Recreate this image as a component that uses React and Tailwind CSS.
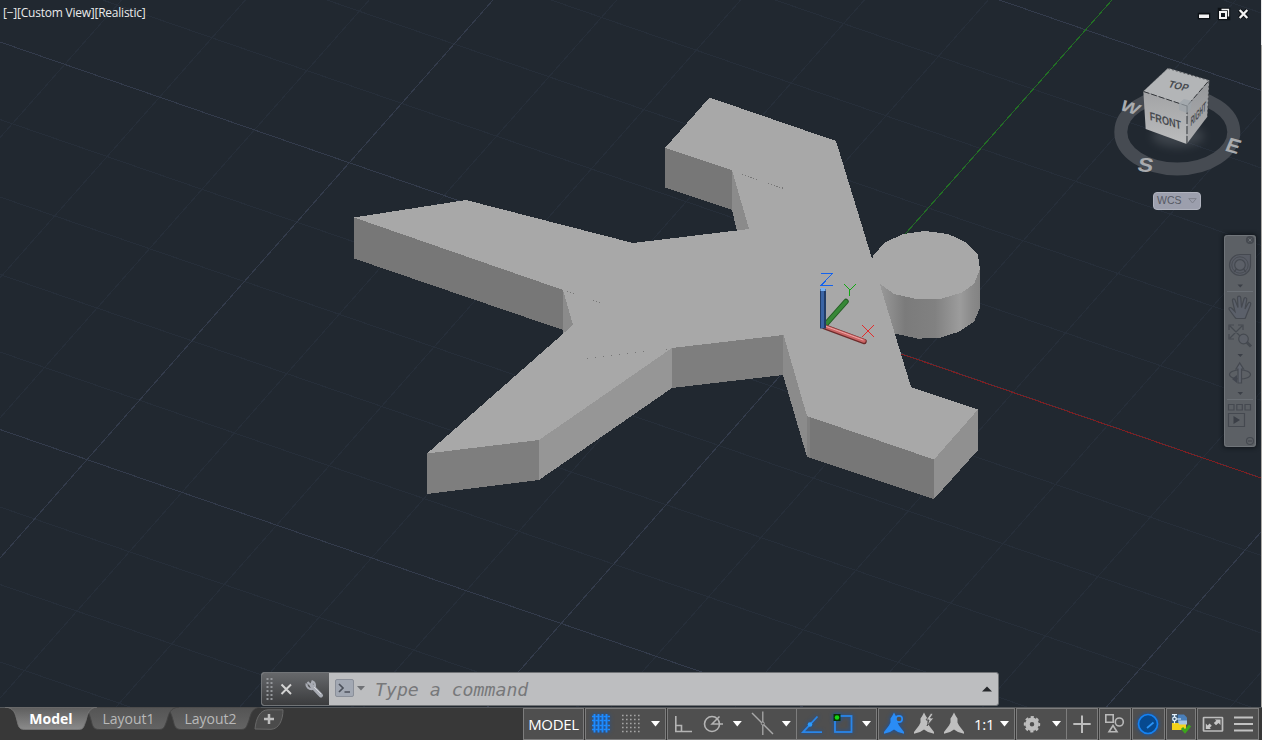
import React from "react";

/* ---------- drawing canvas ---------- */

const GRID_K = 0.3457;
const GRID_M = 1.132;

const rowLines = [];
for (let i = -6; i <= 9; i++) rowLines.push({ y: 42 + i * 77.5, major: i % 5 === 0 });
const colLines = [];
for (let i = -9; i <= 12; i++) colLines.push({ x: 1112 + i * 123.8, major: i % 5 === 0 });

function Grid() {
  const draw = (major) => (
    <g stroke={major ? "#333b4b" : "#262e39"}>
      {rowLines.filter((l) => l.major === major).map((l) => (
        <line key={"r" + l.y} x1="0" y1={l.y} x2="1261" y2={l.y + 1261 * GRID_K} />
      ))}
      {colLines.filter((l) => l.major === major).map((l) => (
        <line key={"c" + l.x} x1={l.x} y1="0" x2={l.x - 707 / GRID_M} y2="707" />
      ))}
    </g>
  );
  return (
    <g shapeRendering="crispEdges">
      {draw(false)}
      {draw(true)}
      <line x1="823" y1="327" x2="1112" y2="0" stroke="#226f24" />
      <line x1="823" y1="327" x2="1261" y2="478" stroke="#7d1f22" />
    </g>
  );
}

function Solid() {
  return (
    <g shapeRendering="crispEdges">
      <polygon fill="#777777" points="354,217.5 370,219 563,286 563,330 354,258.5" />
      <polygon fill="#8b8b8b" points="563,288 576,322 573,326 563,335" />
      <polygon fill="#777777" points="665,148 680,149 732,167 732,210 665,187.5" />
      <polygon fill="#8b8b8b" points="732,168 736,168 751,227 749,230 737,231 732,210" />
      <polygon fill="#7e7e7e" points="427,453 440,448 539,437 539,480 427,494" />
      <polygon fill="#969696" points="539,438 672,345 672,388 539,480" />
      <polygon fill="#7e7e7e" points="672,346 783,333 783,375 672,388" />
      <polygon fill="#8b8b8b" points="783,333 787,333 809,414 807,457 783,375" />
      <polygon fill="#777777" points="807,414 934,457 934,499 807,457" />
      <rect x="807" y="416" width="3" height="41" fill="#808080" />
      <polygon fill="#909090" points="934,457 972,408 978,409 978,450 934,499" />
      <polygon
        fill="url(#cyl)"
        points="872,284 880,280 980,267 980,308 974,321.7 959,331.7 940.7,337.7 918.3,338.7 895,333.5 888,331"
      />
      <polygon
        fill="#a8a8a8"
        points="873,255.7 885,242.3 903.3,234 925,231 948.3,234 966,242.3 977.7,254 980,269 974,284 961.7,292.7 940,299 916.7,299 894,294 880.7,284.3 870,270"
      />
      <polygon
        fill="#a8a8a8"
        points="354,217.5 466,200 633,243 749,229 732,170 665,148 709.5,97.5 836,141 872.5,260 911,387 978,409.5 934,459.5 807,416 783.5,335 672,348 539,440 427,453.5 573,325 563,290"
      />
      <g stroke="#777" strokeDasharray="1 2">
        <path d="M742 174.500L757 179.500M768 183.500L784 188.500M567 291.500L574 293.500M593 300.500L600 302.500" fill="none" />
        <path d="M587 358.500L672 348.500" strokeDasharray="1 7" />
      </g>
    </g>
  );
}

function Ucs() {
  return (
    <g fill="none">
      <g strokeLinecap="round">
        <path d="M826 324L846 301.500" stroke="#245c24" strokeWidth="5.500" />
        <path d="M826 324L846 301.500" stroke="#378837" strokeWidth="3.500" />
        <path d="M825 327L864 341.500" stroke="#6d2b2b" strokeWidth="5.500" />
        <path d="M825 326.700L864 341" stroke="#c96464" strokeWidth="3.500" />
        <path d="M825 326L863 340" stroke="#efa5a5" strokeWidth="1" />
      </g>
      <path d="M823 289V328.500" stroke="#223d68" strokeWidth="6" />
      <path d="M822.500 289V328" stroke="#3a64a5" strokeWidth="3" />
      <path d="M820.500 289.500H825.500" stroke="#78b2f5" strokeWidth="3" />
      <g shapeRendering="crispEdges">
        <path d="M821 273.500H832.500L821 285.500H833" stroke="#1463ee" />
        <path d="M844 284L850 290L856 284M849.500 290V296" stroke="#12a812" />
        <path d="M862 325L874 337M874 325L862 337" stroke="#e22c2c" />
      </g>
    </g>
  );
}

function ViewCube() {
  return (
    <g fontFamily="'Liberation Sans', Arial, sans-serif" fontWeight="700">
      <ellipse cx="1177.300" cy="132" rx="56.500" ry="37" fill="none" stroke="#464b52" strokeWidth="13" />
      <ellipse cx="1178" cy="136" rx="26" ry="11" fill="#7d8288" opacity=".3" filter="url(#soft)" />
      <g fill="#a9abae" fontSize="20">
        <text transform="matrix(.95 .3 -.42 .7 1118.500 109.500)">W</text>
        <text transform="matrix(1 .28 -.4 .95 1224 150.500)">E</text>
        <text transform="matrix(1.150 .1 -.22 .98 1136.500 171)">S</text>
      </g>
      <polygon fill="#b3b5b7" points="1168,68 1209.300,80.300 1187.300,106 1143.300,91.300" />
      <polygon fill="url(#front)" points="1143.300,91.300 1187.300,106 1186.700,144 1145.700,129" />
      <polygon fill="url(#right)" points="1187.300,106 1209.300,80.300 1207.300,116.700 1186.700,144" />
      <g fill="none" stroke="#35383c" strokeWidth="1">
        <path d="M1143.500 91.500L1187 106L1209 80.500" strokeDasharray="6 2" />
        <path d="M1187 106V144" strokeDasharray="8 2" />
        <path d="M1168 68.500L1209 80.500L1207.500 117" strokeDasharray="2 2" opacity=".7" />
        <path d="M1143.500 91L1168 68.500" strokeDasharray="1 1" opacity=".4" />
      </g>
      <g fill="#484b50">
        <text transform="matrix(.96 .22 -.4 .82 1167.500 87)" fontSize="11.500" textLength="20" lengthAdjust="spacingAndGlyphs">TOP</text>
        <text transform="matrix(.95 .29 .06 1 1150 120)" fontSize="12" textLength="33" lengthAdjust="spacingAndGlyphs">FRONT</text>
        <text transform="matrix(.66 -.72 -.04 1 1190.500 126.500)" fontSize="13" textLength="23" lengthAdjust="spacingAndGlyphs">RIGHT</text>
      </g>
      <polygon fill="#9ca4a9" opacity=".7" points="1179,103 1184,99 1192,101 1191,109 1187,113 1179,110" />
    </g>
  );
}

function Scene() {
  return (
    <svg width="1261" height="707" viewBox="0 0 1261 707" className="block">
      <defs>
        <linearGradient id="cyl" gradientUnits="userSpaceOnUse" x1="880" y1="0" x2="980" y2="0">
          <stop offset="0" stopColor="#999" />
          <stop offset=".25" stopColor="#7b7b7b" />
          <stop offset=".55" stopColor="#818181" />
          <stop offset=".8" stopColor="#9c9c9c" />
          <stop offset=".92" stopColor="#8a8a8a" />
          <stop offset="1" stopColor="#838383" />
        </linearGradient>
        <linearGradient id="front" x1="0" y1="0" x2="0" y2="1">
          <stop offset="0" stopColor="#a2a3a5" />
          <stop offset="1" stopColor="#bbbcbd" />
        </linearGradient>
        <linearGradient id="right" x1="0" y1="0" x2="0" y2="1">
          <stop offset="0" stopColor="#95979a" />
          <stop offset="1" stopColor="#adaeb0" />
        </linearGradient>
        <filter id="soft" x="-30%" y="-50%" width="160%" height="200%">
          <feGaussianBlur stdDeviation="5" />
        </filter>
      </defs>
      <Grid />
      <Solid />
      <Ucs />
      <ViewCube />
    </svg>
  );
}

function WindowButtons() {
  return (
    <svg width="54" height="14" viewBox="1197 7 54 14" className="absolute top-[7px] left-[1197px]">
      <g stroke="#0d1115" strokeWidth="2.500" fill="#0d1115">
        <rect x="1199" y="14" width="10" height="4" />
        <path d="M1239.500 10L1247.500 18M1247.500 10L1239.500 18" strokeWidth="4.500" />
        <rect x="1219" y="9" width="10" height="10" />
      </g>
      <rect x="1199" y="14.500" width="10" height="3.500" fill="#f2f2f2" />
      <path d="M1221.500 9.500H1228.500V16.500" stroke="#f2f2f2" strokeWidth="1.300" fill="none" />
      <rect x="1220" y="12" width="6" height="6" fill="#11161b" stroke="#f2f2f2" strokeWidth="2" />
      <path d="M1239.700 10L1247.300 18M1247.300 10L1239.700 18" stroke="#f2f2f2" strokeWidth="2.300" />
    </svg>
  );
}

function NavBar() {
  return (
    <div className="absolute top-[235px] left-[1224px] h-[212px] w-8 rounded-[3px] bg-[#5c6065] shadow-[0_0_4px_1px_rgba(10,14,18,0.7)]">
      <svg width="32" height="212" viewBox="1224 235 32 212" className="block" fill="none" stroke="#454950" strokeWidth="1.200">
        <rect x="1224.500" y="235.500" width="31" height="211" rx="3" stroke="#70757a" strokeWidth="1" />
        <circle cx="1250" cy="240" r="3.500" fill="#484c52" />
        <path d="M1248.500 238.500L1251.500 241.500M1251.500 238.500L1248.500 241.500" stroke="#6a6f75" strokeWidth="1" />
        <path d="M1240 254.500H1250.500V265A10.500 10.500 0 1 1 1240 254.500Z" fill="#585c65" />
        <circle cx="1240" cy="265" r="8.200" strokeWidth=".9" />
        <circle cx="1240" cy="265" r="5.300" fill="#5c6068" />
        <path d="M1234 272L1236.500 269M1246 272L1243.500 269" />
        <path d="M1227 291.500H1253M1227 399.500H1253" stroke="#6b7076" strokeWidth="1" />
        <g fill="#3b3f47" stroke="none">
          <path d="M1237.500 284.500H1243L1240.300 287.500ZM1237.500 354H1243L1240.300 357ZM1237.500 392H1243L1240.300 395Z" />
        </g>
        <path d="M1235 317.500L1229.500 310C1228 308 1230 306.500 1232 308.500L1235 311.500L1232.500 301C1232 298.500 1234.500 298 1235.300 300.500L1238 307.500L1237.500 298C1237.500 295.500 1240.500 295.500 1240.800 298L1241.500 307.500L1244 299C1244.700 296.700 1247.200 297.500 1246.700 300L1245 309L1248 303.500C1249.200 301.500 1251.500 302.500 1250.500 305L1246.500 315C1245.500 318 1245 318.500 1245 318.500H1236Z" fill="#5b606a" />
        <path d="M1230 326L1242 338M1242 326L1230 338M1229 330V325H1234M1238 325H1243V330M1229 334V339H1234" />
        <circle cx="1243.500" cy="339" r="4.800" fill="#5c6068" />
        <path d="M1247 342.500L1251 346.500" strokeWidth="3" />
        <ellipse cx="1240" cy="374.500" rx="10.500" ry="4.500" />
        <path d="M1238 383V369H1236L1239.700 363L1243.500 369H1241.500V383Z" fill="#5f646d" />
        <path d="M1237 375L1232 379L1237 383Z" fill="#42464f" stroke="none" />
        <path d="M1228.500 404.500H1234V410H1228.500ZM1236.800 404.500H1242.300V410H1236.800ZM1245 404.500H1250.500V410H1245Z" />
        <path d="M1228.500 413.500H1244.500V426.500H1228.500Z" />
        <path d="M1233.500 416L1240 420L1233.500 424Z" fill="#3b3f47" stroke="none" />
        <circle cx="1250" cy="441" r="3.500" />
        <path d="M1248 441H1252" />
      </svg>
    </div>
  );
}

function CommandLine() {
  return (
    <div className="absolute top-[672px] left-[261px] flex h-[34px] w-[738px] overflow-hidden rounded-[3px] border border-[#717477] bg-[#bdbec0]">
      <div className="flex w-[67px] shrink-0 items-center bg-linear-to-b from-[#66686b] to-[#3b3c3e]">
        <svg width="67" height="32" viewBox="262 673 67 32" fill="none">
          <path d="M267.500 678V700M271.500 678V700" stroke="#94979b" strokeWidth="2" strokeDasharray="2 2" />
          <path d="M281.500 684.500L291 694M291 684.500L281.500 694" stroke="#d3d3d3" strokeWidth="2" />
          <path d="M312 686L321 695.500" stroke="#a9acb4" strokeWidth="4" strokeLinecap="round" />
          <path d="M307.500 682L311 685.500L312.500 681.500C316 683 315.500 688.500 312.500 689C309 689.500 306 687 306.500 683.500" stroke="#a9acb4" strokeWidth="2.200" fill="none" />
          <path d="M314 687L321 694" stroke="#d5d7dc" strokeWidth="1" />
        </svg>
      </div>
      <div className="flex flex-1 items-center">
        <svg width="36" height="32" viewBox="329 673 36 32" fill="none">
          <rect x="335.500" y="679.500" width="18" height="17" rx="1.500" fill="#a2a8b3" stroke="#8a8f99" />
          <path d="M339 684L343 688L339 692" stroke="#4c515b" strokeWidth="1.700" />
          <path d="M344.500 692H350" stroke="#4c515b" strokeWidth="1.600" />
          <path d="M357 686H365L361 690.500Z" fill="#6f7175" />
        </svg>
        <span className="mt-[2px] ml-[10px] flex-1 whitespace-nowrap font-['DejaVu_Sans_Mono',monospace] text-[18.200px] leading-[32px] text-[#77787a] italic">
          Type a command
        </span>
        <svg width="10" height="6" viewBox="0 0 10 6" className="mr-[6px] shrink-0">
          <path d="M0 5.500L5 0.500L10 5.500Z" fill="#26282b" />
        </svg>
      </div>
    </div>
  );
}

/* ---------- bottom bar ---------- */

function LayoutTab({ label, width, layer, active = false }) {
  return (
    <div className={"relative -ml-[19px] flex h-[23px] items-center justify-center " + layer} style={{ width }}>
      <svg width="100%" height="23" viewBox="0 0 91 23" preserveAspectRatio="none" className="absolute inset-0">
        <defs>
          <linearGradient id={active ? "tabOn" : "tabOff"} x1="0" y1="0" x2="0" y2="1">
            <stop offset="0" stopColor={active ? "#5d5d5d" : "#545454"} />
            <stop offset="1" stopColor={active ? "#8b8b8b" : "#646464"} />
          </linearGradient>
        </defs>
        <path
          d="M0 0C9 1 10 6 12 14C13 19 14 22.500 19 22.500H73C78 22.500 78 19 80 14C82 6 83 1 91 0Z"
          fill={active ? "url(#tabOn)" : "url(#tabOff)"}
          stroke={active ? "#777" : "#444"}
          strokeWidth=".9"
        />
      </svg>
      <span
        className={
          active
            ? "relative font-['Open_Sans','Noto_Sans',sans-serif] text-[14px] leading-[22px] font-bold text-white"
            : "relative font-['Open_Sans','Noto_Sans',sans-serif] text-[14px] leading-[22px] text-[#b9b9b9]"
        }
      >
        {label}
      </span>
    </div>
  );
}

function Group({ children, className }) {
  return (
    <div className={"box-border flex h-[32px] shrink-0 items-center overflow-hidden border border-[#7d7d7d] bg-[#4f4f4f] " + className}>
      {children}
    </div>
  );
}

function Ico({ x, w, children, glow = false }) {
  return (
    <svg
      width={w}
      height="30"
      viewBox={`${x} 709 ${w} 30`}
      fill="none"
      className={glow ? "shrink-0 drop-shadow-[0_0_2px_#0a54b8]" : "shrink-0"}
    >
      {children}
    </svg>
  );
}

function Caret({ x, w, cx }) {
  return (
    <Ico x={x} w={w}>
      <path d={`M${cx - 4.5} 721H${cx + 4.5}L${cx} 726.500Z`} fill="#fff" />
    </Ico>
  );
}

const Person = ({ dx, fill }) => (
  <path
    transform={`translate(${dx} 0)`}
    d="M0 712.500L1.800 716L3.500 718.500V722.500L5 725.500L10 732V733.800L4 732L0 729.500L-4 732L-10 733.800V732L-5 725.500L-3.500 722.500V718.500L-1.800 716Z"
    fill={fill}
  />
);

function StatusBar() {
  return (
    <div className="flex h-[33px] items-start gap-px pt-px font-['Open_Sans','Noto_Sans',sans-serif]">
      <Group className="w-[61px] justify-center">
        <span className="text-[15px] leading-[30px] tracking-[-0.300px] text-white">MODEL</span>
      </Group>
      <Group className="w-[81px]">
        <Ico x={586} w={29} glow>
          <path d="M594.500 714V732.500M598.500 714V732.500M602.500 714V732.500M606.500 714V732.500" stroke="#1e8bff" strokeWidth="1.900" />
          <path d="M592 716.500H610M592 720.500H610M592 725.500H610M592 729.500H610" stroke="#1e8bff" strokeWidth="1.300" strokeDasharray="3.500 .500" />
        </Ico>
        <Ico x={615} w={30}>
          <path d="M622 715.500H640M622 719.500H640M622 723.500H640M622 727.500H640M622 731.500H640" stroke="#a5a5a5" strokeWidth="1.600" strokeDasharray="1.600 2.400" />
        </Ico>
        <Caret x={645} w={20} cx={655.5} />
      </Group>
      <Group className="w-[130px]">
        <Ico x={668} w={29}>
          <path d="M675.800 716V731.500H692M676 725.500H681.500V731" stroke="#b4b4b4" strokeWidth="1.600" />
        </Ico>
        <Ico x={697} w={31}>
          <circle cx="712" cy="724" r="7.500" stroke="#b4b4b4" strokeWidth="1.600" />
          <path d="M723 724H712L719.500 716.500" stroke="#b4b4b4" strokeWidth="1.500" />
        </Ico>
        <Caret x={728} w={20} cx={737.3} />
        <Ico x={748} w={28}>
          <path d="M752 713L773 734" stroke="#a8a8a8" strokeWidth="1.500" />
          <path d="M762.800 711.500V735" stroke="#a8a8a8" strokeWidth="1.300" />
          <circle cx="762.800" cy="723.500" r="1.500" fill="#4f4f4f" stroke="#a8a8a8" />
        </Ico>
        <Caret x={776} w={20} cx={786.3} />
      </Group>
      <Group className="-ml-[2px] w-[81px]">
        <Ico x={797} w={30} glow>
          <path d="M817.500 716.500L803 732.200H822" stroke="#2a86e8" strokeWidth="1.800" />
          <circle cx="810" cy="724.500" r="2.300" fill="#2a9bff" />
        </Ico>
        <Ico x={827} w={30} glow>
          <rect x="835" y="716" width="16.500" height="16" stroke="#2a86e8" strokeWidth="1.800" />
          <rect x="833.500" y="714" width="7" height="7" fill="#0b3306" />
          <circle cx="837" cy="717.500" r="2.300" fill="#12d612" />
        </Ico>
        <Caret x={857} w={19} cx={866.5} />
      </Group>
      <Group className="w-[137px]">
        <Ico x={879} w={31} glow>
          <Person dx={894} fill="#2a8cf5" />
          <circle cx="899" cy="719" r="3.200" stroke="#2a8cf5" strokeWidth="1.700" fill="#4f4f4f" />
        </Ico>
        <Ico x={910} w={29}>
          <Person dx={924} fill="#bfbfbf" />
          <path d="M931 713L926 720H929L927 726L934 718H930.500L933 714Z" fill="#bfbfbf" stroke="#4f4f4f" strokeWidth=".9" />
        </Ico>
        <Ico x={939} w={30}>
          <Person dx={954} fill="#bfbfbf" />
        </Ico>
        <span className="ml-[5px] w-[22px] text-[15px] leading-[30px] tracking-[-0.300px] text-white">1:1</span>
        <Caret x={996} w={18} cx={1004.5} />
      </Group>
      <Group className="w-[51px]">
        <Ico x={1017} w={31}>
          <circle cx="1032" cy="724.300" r="4.500" stroke="#bdbdbd" strokeWidth="4.500" />
          <circle cx="1032" cy="724.300" r="7.200" stroke="#bdbdbd" strokeWidth="2" strokeDasharray="3.150 2.500" strokeDashoffset="1.500" />
        </Ico>
        <Caret x={1048} w={18} cx={1056.5} />
      </Group>
      <Group className="-ml-[2px] w-[32px]">
        <Ico x={1067} w={30}>
          <path d="M1073.300 724H1090.700M1082 715.500V733" stroke="#bdbdbd" strokeWidth="2" />
        </Ico>
      </Group>
      <Group className="w-[32px]">
        <Ico x={1100} w={30}>
          <path d="M1105.800 714.800H1113.200V722.300H1105.800Z" stroke="#b9b9b9" strokeWidth="1.600" />
          <circle cx="1119.300" cy="722" r="4" stroke="#b9b9b9" strokeWidth="1.600" />
          <path d="M1113 725.500L1117 731.700H1109Z" stroke="#b9b9b9" strokeWidth="1.600" />
        </Ico>
      </Group>
      <Group className="w-[33px]">
        <Ico x={1133} w={31} glow>
          <circle cx="1148" cy="724" r="9.500" fill="#07498f" stroke="#1583f3" strokeWidth="1.700" />
          <path d="M1147 728L1153.500 722.500" stroke="#2a93f5" strokeWidth="1.700" />
        </Ico>
      </Group>
      <Group className="w-[30px]">
        <Ico x={1167} w={28}>
          <path d="M1178 714.500H1184L1187 717.500V724H1178Z" fill="#4a7fb9" />
          <path d="M1172 723H1186V730H1172Z" fill="#f3d31b" />
          <path d="M1178 720.500H1187V724.500H1179Z" fill="#a7c5e5" />
          <path d="M1171.500 714H1178V723H1171.500Z" fill="#3b5975" />
          <circle cx="1174.500" cy="719" r="1.800" stroke="#e4f1fb" strokeWidth="1.300" />
          <path d="M1174.500 714V717M1174.500 721V723.500M1176.500 719H1181M1172 714.700H1177" stroke="#e4f1fb" strokeWidth="1.200" />
          <path d="M1182 728L1185 731.500L1190 725.500" stroke="#3ca51c" strokeWidth="3" />
        </Ico>
      </Group>
      <Group className="w-[62px]">
        <Ico x={1198} w={31}>
          <rect x="1203.500" y="717.500" width="19" height="13.500" rx=".5" stroke="#bdbdbd" strokeWidth="1.700" />
          <path d="M1220.500 719.500V725L1218.500 723L1216 725.300L1213.800 723L1216.300 720.800L1214.800 719.500ZM1205.800 729V723.500L1207.700 725.400L1209.500 723.500L1211.800 725.800L1209.700 727.700L1211 729Z" fill="#c8c8c8" />
        </Ico>
        <Ico x={1229} w={29}>
          <path d="M1234 717.500H1253M1234 724H1253M1234 730.500H1253" stroke="#c2c2c2" strokeWidth="2" />
        </Ico>
      </Group>
    </div>
  );
}

export default function App() {
  return (
    <div className="flex h-[740px] w-[1262px] flex-col overflow-hidden bg-[#383838]">
      <div className="relative flex h-[707px] shrink-0 bg-[#212830]">
        <Scene />
        <div className="flex w-px flex-col">
          <div className="h-[45px] bg-[#e8e8e8]" />
          <div className="flex-1 bg-[#aaa9a5]" />
        </div>
        <div className="absolute top-[5px] left-[3px] whitespace-nowrap font-['Open_Sans','Noto_Sans',sans-serif] text-[12px] leading-4 font-medium tracking-[-0.230px] text-[#e9eaeb]">
          [−][Custom View][Realistic]
        </div>
        <WindowButtons />
        <button className="absolute top-[192px] left-[1153px] flex h-[18px] w-[48px] items-center justify-between rounded-[4px] border border-[#b0b3be] bg-[#9c9fad] px-[3px] font-['Liberation_Sans',Arial,sans-serif] text-[10.500px] text-[#565963]">
          WCS
          <svg width="9" height="6" viewBox="0 0 9 6">
            <path d="M.8 .6H8.200L4.500 5Z" fill="none" stroke="#7e818c" />
          </svg>
        </button>
        <NavBar />
        <CommandLine />
      </div>
      <div className="flex h-[33px] shrink-0 border-t border-[#55585b]">
        <div className="-mt-px flex w-[523px] items-start pl-[24px]">
          <LayoutTab label="Model" width={92} layer="z-20" active />
          <LayoutTab label="Layout1" width={101} layer="z-10" />
          <LayoutTab label="Layout2" width={101} layer="z-0" />
          <svg width="30" height="22" viewBox="0 0 30 22" className="mt-[2px] -ml-[7px]">
            <path d="M1 20C2 9 6 1 14 .8H29C29 11 25 20 17 20.300Z" fill="#4b4b4b" stroke="#686868" />
            <path d="M10 10H20M15 5V15" stroke="#bdbdbd" strokeWidth="2.500" />
          </svg>
        </div>
        <div className="-mt-px">
          <StatusBar />
        </div>
      </div>
    </div>
  );
}
